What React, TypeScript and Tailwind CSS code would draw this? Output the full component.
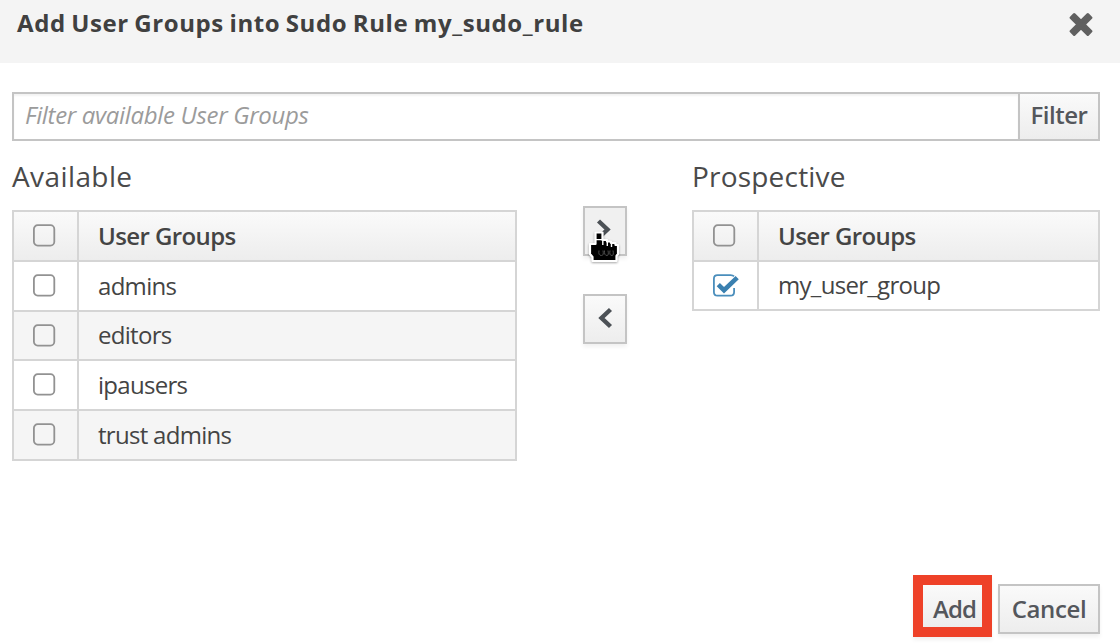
import React from "react";

const Box = ({ checked = false }: { checked?: boolean }) => (
  <svg width="30" height="26" viewBox="0 0 30 26" fill="none" className="shrink-0">
    {checked ? (
      <>
        <path d="M22 3.3Q21 2.1 18.5 2.1H5.5Q1.9 2.1 1.9 5.7V18.9Q1.9 22.6 5.5 22.6H18.5Q22.1 22.6 22.1 18.9V15" stroke="#4a8ebc" strokeWidth="1.8" />
        <path d="M6.3 11.7L12 17.2L25.2 4.6" stroke="#3a80b0" strokeWidth="4.6" />
      </>
    ) : (
      <rect x="1.9" y="2.2" width="20.4" height="20.4" rx="3.8" stroke="#929292" strokeWidth="1.8" />
    )}
  </svg>
);

const Row = ({ label, head = false, checked = false, className = "" }: { label: string; head?: boolean; checked?: boolean; className?: string }) => (
  <div className={`flex border-b-2 border-[#d5d5d5] ${className}`}>
    <div className="flex w-[65px] shrink-0 items-center border-r-2 border-[#d5d5d5] pl-[18px]">
      <Box checked={checked} />
    </div>
    <div className={`flex items-center pb-px pl-[19px] text-[24px] text-[#444] ${head ? "font-semibold tracking-[-0.6px]" : "tracking-[-0.7px]"}`}>{label}</div>
  </div>
);

const button = "flex items-center justify-center border-2 border-[#c4c4c4] text-[24px] font-semibold text-[#54575c] shadow-[0_3px_4px_rgba(0,0,0,0.06)]";
const raised = "bg-linear-to-b from-[#fafafa] to-[#ededed]";

export default function App() {
  return (
    <div className="flex h-[644px] w-[1120px] flex-col overflow-hidden bg-white font-['Open_Sans',sans-serif] leading-none">
      <header className="flex h-[62.5px] shrink-0 items-start justify-between bg-[#f4f4f4] pl-[17px] pr-[27px]">
        <h1 className="pt-[11px] text-[24px] font-bold tracking-[0.58px] text-[#404040] [word-spacing:-1.2px]">Add User Groups into Sudo Rule my_sudo_rule</h1>
        <button aria-label="Close" className="pt-[12px]">
          <svg width="24" height="25" viewBox="0 0 24 25">
            <path d="M5.2 2.6L12 9.4L18.8 2.6L21.9 5.7L15.1 12.5L21.9 19.3L18.8 22.4L12 15.6L5.2 22.4L2.1 19.3L8.9 12.5L2.1 5.7Z" fill="#606060" stroke="#606060" strokeWidth="3" strokeLinejoin="round" />
          </svg>
        </button>
      </header>

      <div className="mt-[29.5px] flex h-[49px] shrink-0 pl-[12px] pr-[20px]">
        <input placeholder="Filter available User Groups" className="min-w-0 flex-1 border-2 border-r-0 border-[#c4c4c4] pb-[5px] pl-[11px] text-[24px] italic tracking-[-0.33px] shadow-[inset_0_2px_2px_rgba(0,0,0,0.05)] outline-none placeholder:text-[#9b9b9b]" />
        <button className={`${button} ${raised} w-[82px] pb-[3px] tracking-[-0.5px] shadow-none`}>Filter</button>
      </div>

      <main className="flex h-[435px] shrink-0 pl-[12px] pr-[20px]">
        <section className="w-[505px]">
          <h2 className="h-[69px] pt-[21px] text-[28px] tracking-[0.4px] text-[#4a4a4a]">Available</h2>
          <div className="border-2 border-b-0 border-[#d5d5d5]">
            <Row head label="User Groups" className="h-[50px] bg-linear-to-b from-[#fafafa] to-[#ededed]" />
            <Row label="admins" className="h-[50px]" />
            <Row label="editors" className="h-[49px] bg-[#f5f5f5]" />
            <Row label="ipausers" className="h-[50px]" />
            <Row label="trust admins" className="h-[50px] bg-[#f5f5f5]" />
          </div>
        </section>

        <div className="flex w-[175px] flex-col items-center gap-[38px] pt-[65px]">
          <div className="relative">
            <button aria-label="Move to prospective" className={`${button} h-[50px] w-[44px] bg-[#f0f0f0]`}>
              <svg width="40" height="46" viewBox="0 0 40 46" fill="none"><path d="M13.5 13L22.5 21.5L13.5 30" stroke="#4c5156" strokeWidth="4.4" /></svg>
            </button>
            <svg className="absolute left-[4px] top-[24px] drop-shadow-[0_1px_1px_rgba(0,0,0,0.35)]" width="34" height="36" viewBox="0 0 34 36">
              <path d="M8.5 2.5H15.5V10H20V11.5H24V13H28.5V15H31V24L29.5 26V31H5.5V27L3 24V14H8.5Z" fill="#000" stroke="#fff" strokeWidth="2.2" strokeLinejoin="round" />
              <path d="M8.5 9.6H15.5M15.8 11V15M20.3 12V16M24.5 14V17" stroke="#fff" strokeWidth="1.4" />
              <path d="M12 20.5Q11 25.5 14.5 25.5Q17 25.5 16 20.5M17.5 20.5Q17 25.5 20 25.5Q22 25.5 21 20.5M23 20.5Q22 25.5 25 25.5Q27 25.5 26 20.5" stroke="#555" strokeWidth="0.9" fill="none" />
            </svg>
          </div>
          <button aria-label="Move to available" className={`${button} ${raised} h-[50px] w-[44px]`}>
            <svg width="40" height="46" viewBox="0 0 40 46" fill="none"><path d="M25.5 13.5L16.5 22L25.5 30.5" stroke="#4c5156" strokeWidth="4.4" /></svg>
          </button>
        </div>

        <section className="w-[408px]">
          <h2 className="h-[69px] pt-[21px] text-[28px] tracking-[0.2px] text-[#4a4a4a]">Prospective</h2>
          <div className="border-2 border-b-0 border-[#d5d5d5]">
            <Row head label="User Groups" className="h-[50px] bg-linear-to-b from-[#fafafa] to-[#ededed]" />
            <Row checked label="my_user_group" className="h-[49px]" />
          </div>
        </section>
      </main>

      <footer className="flex h-[68px] shrink-0 items-start justify-end pr-[20px]">
        <button className="-mt-px mr-[6px] flex h-[62px] w-[79px] items-center justify-center border-[10px] border-[#ee4128] bg-linear-to-b from-[#fafafa] to-[#ededed] pl-[4px] pt-[6px] text-[24px] font-semibold tracking-[-0.9px] text-[#54575c] shadow-[0_3px_4px_rgba(0,0,0,0.06)]">Add</button>
        <button className={`${button} ${raised} mt-[8px] h-[50px] w-[102px] tracking-[-0.35px]`}>Cancel</button>
      </footer>
    </div>
  );
}
